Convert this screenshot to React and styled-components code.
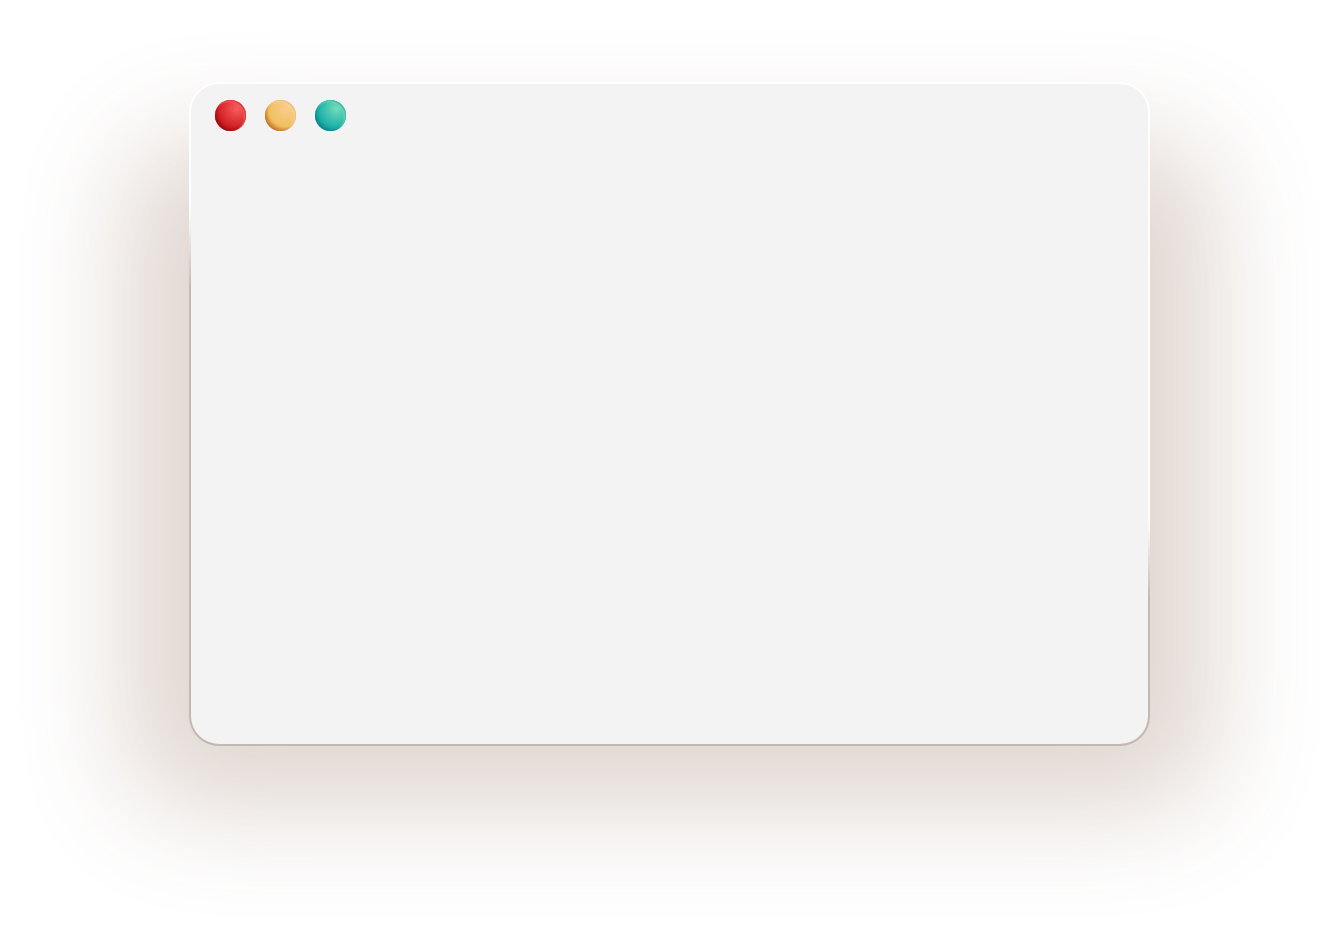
import React from "react";
import styled, { createGlobalStyle } from "styled-components";

const GlobalStyle = createGlobalStyle`
  *, *::before, *::after { box-sizing: border-box; }
  body {
    margin: 0;
    background: #ffffff;
    font-family: "Liberation Sans", sans-serif;
  }
`;

const Desktop = styled.main`
  display: flex;
  min-height: 100vh;
  padding: 82px 190px 190px 189px;
  overflow: hidden;
`;

const Window = styled.section`
  position: relative;
  z-index: 0;
  flex: 1;
  display: flex;
`;

/* Soft glow that sits behind the lower part of the window */
const WindowShadow = styled.div`
  position: absolute;
  z-index: -1;
  inset: 128px 8px 8px;
  border-radius: 20px;
  box-shadow: 0 0 110px 70px rgba(120, 78, 54, 0.23);
`;

const WindowFrame = styled.div`
  flex: 1;
  border: 2px solid transparent;
  border-radius: 30px;
  background:
    linear-gradient(#f3f3f3, #f3f3f3) padding-box,
    linear-gradient(198deg, #ffffff 45%, #c4b9b2 53%) border-box;
`;

const TitleBar = styled.header`
  display: flex;
  gap: 19px;
  padding: 16px 24px;
`;

const ControlButton = styled.button`
  width: 31px;
  height: 31px;
  padding: 0;
  border: 0;
  border-radius: 50%;
  background: radial-gradient(
    circle at 70% 28%,
    ${(p) => p.$light} 0%,
    ${(p) => p.$base} 58%,
    ${(p) => p.$dark} 100%
  );
  box-shadow:
    inset -1px 1px 1px ${(p) => p.$edge},
    inset -2px 2px 2px ${(p) => p.$rim},
    inset 2px -2px 3px -1px ${(p) => p.$shade};
`;

const controls = [
  { label: "Close", light: "#f85c5c", base: "#d22226", dark: "#840000", edge: "#d8383c", rim: "#ee6464", shade: "#a4080c" },
  { label: "Minimize", light: "#f9cd8c", base: "#f0c060", dark: "#a84a0c", edge: "#ecc070", rim: "#f8d4a0", shade: "#c67a2a" },
  { label: "Maximize", light: "#72dcb8", base: "#20b2aa", dark: "#046c76", edge: "#40b8a4", rim: "#6ed8bb", shade: "#078990" },
];

export default function App() {
  return (
    <>
      <GlobalStyle />
      <Desktop>
        <Window>
          <WindowShadow />
          <WindowFrame>
            <TitleBar>
              {controls.map((c) => (
                <ControlButton
                  key={c.label}
                  type="button"
                  aria-label={c.label}
                  $light={c.light}
                  $base={c.base}
                  $dark={c.dark}
                  $edge={c.edge}
                  $rim={c.rim}
                  $shade={c.shade}
                />
              ))}
            </TitleBar>
          </WindowFrame>
        </Window>
      </Desktop>
    </>
  );
}
